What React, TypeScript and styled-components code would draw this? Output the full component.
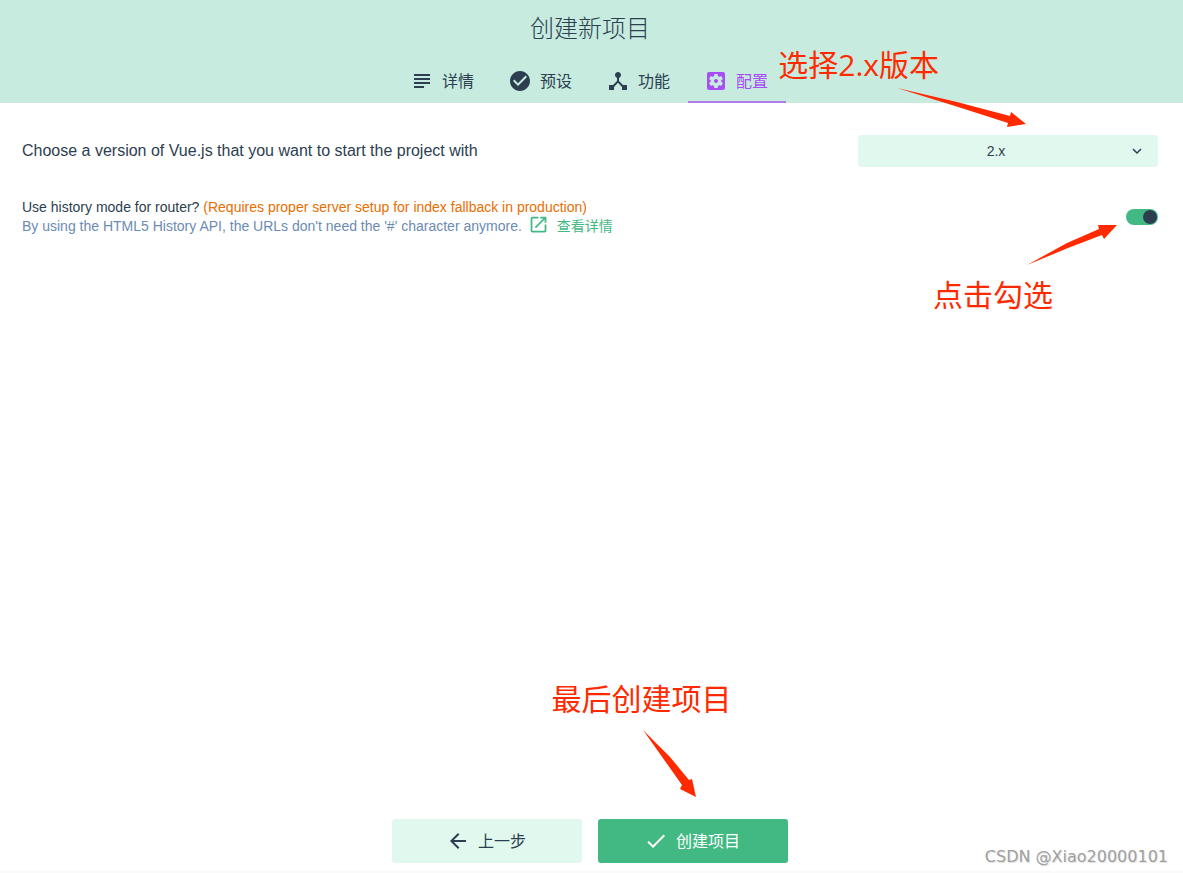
import React from 'react';
import styled, { createGlobalStyle } from 'styled-components';
import {
  MdArrowBack,
  MdCheckCircle,
  MdDeviceHub,
  MdDone,
  MdKeyboardArrowDown,
  MdOpenInNew,
  MdSettingsApplications,
  MdSubject,
} from 'react-icons/md';

const ink = '#2c3e50';
const green = '#42b983';
const mint = '#e0f8ed';
const purple = '#a84cf5';
const red = '#ff2a00';

const GlobalStyle = createGlobalStyle`
  * { box-sizing: border-box; }
  body {
    margin: 0;
    background: #fff;
    color: ${ink};
    font-family: "Liberation Sans", "Noto Sans CJK SC", sans-serif;
    font-size: 16px;
  }
  button, select { font: inherit; color: inherit; border: 0; }
`;

const Page = styled.div`
  position: relative;
  display: flex;
  flex-direction: column;
  min-height: 100vh;
`;

const Header = styled.header`
  display: flex;
  flex-direction: column;
  align-items: center;
  padding-right: 3px;
  background: #c7ebdf;
`;

const Title = styled.h1`
  margin: 0;
  padding-top: 13px;
  font-size: 24px;
  font-weight: 300;
  line-height: 32px;
`;

const Tabs = styled.nav`
  display: flex;
  padding-top: 14px;
`;

const Tab = styled.button<{ $active?: boolean }>`
  display: flex;
  align-items: center;
  gap: 8px;
  width: 98px;
  height: 44px;
  padding: 0 16px;
  background: none;
  box-shadow: ${(p) => (p.$active ? 'inset 0 -2px 0 #b07cec' : 'none')};
  color: ${(p) => (p.$active ? purple : ink)};
  white-space: nowrap;

  svg { flex: none; }
`;

const Label = styled.span`
  padding-bottom: 3px;
`;

const Main = styled.main`
  flex: 1;
  padding: 16px 25px 16px 22px;
`;

const Row = styled.div`
  position: relative;
  display: flex;
  align-items: center;
  justify-content: space-between;
  gap: 24px;
  min-height: 64px;
  margin-bottom: 2px;
`;

const Prompt = styled.label`
  line-height: 24px;
`;

const SelectBox = styled.div`
  position: relative;
  width: 300px;
  flex: none;

  svg {
    position: absolute;
    right: 12px;
    top: 7px;
    pointer-events: none;
  }
`;

const Select = styled.select`
  display: block;
  width: 100%;
  height: 32px;
  padding: 0 40px 0 16px;
  appearance: none;
  background: ${mint};
  border-radius: 3px;
  font-size: 14px;
  text-align: center;
  text-align-last: center;
`;

const Details = styled.div`
  font-size: 14px;
  line-height: 19px;
`;

const Question = styled.label`
  display: block;
`;

const Warning = styled.span`
  color: #ea6e00;
`;

const Hint = styled.div`
  display: flex;
  align-items: center;
  gap: 6px;
  height: 19px;
  color: #6b8bb3;
`;

const MoreLink = styled.a`
  display: flex;
  align-items: center;
  gap: 8px;
  color: ${green};
  text-decoration: none;

  svg { margin-bottom: 4px; }
`;

const Switch = styled.input`
  appearance: none;
  flex: none;
  width: 32px;
  height: 16px;
  margin: 0;
  border-radius: 8px;
  background: #cbd5d1;

  &::before {
    content: "";
    display: block;
    width: 14px;
    height: 14px;
    margin: 1px;
    border-radius: 50%;
    background: ${ink};
  }
  &:checked { background: ${green}; }
  &:checked::before { margin-left: 17px; }
`;

const Footer = styled.footer`
  position: relative;
  display: flex;
  justify-content: center;
  gap: 16px;
  padding: 8px 3px 8px 0;
  border-bottom: 2px solid #fafafa;
`;

const ActionButton = styled.button<{ $primary?: boolean }>`
  display: flex;
  align-items: center;
  justify-content: center;
  gap: 8px;
  width: 190px;
  height: 44px;
  padding: 0 8px 0 6px;
  border-radius: 3px;
  background: ${(p) => (p.$primary ? green : mint)};
  color: ${(p) => (p.$primary ? '#fff' : ink)};
`;

const Note = styled.span<{ $right?: number; $left?: string; $top: number }>`
  position: absolute;
  top: ${(p) => p.$top}px;
  ${(p) => (p.$left ? `left: ${p.$left};` : `right: ${p.$right}px;`)}
  color: ${red};
  font-family: "Open Sans", "Noto Sans CJK SC", sans-serif;
  font-size: 30px;
  line-height: 40px;
  white-space: nowrap;
  pointer-events: none;
`;

const Arrow = styled.svg<{ $right?: number; $left?: string; $top: number }>`
  position: absolute;
  top: ${(p) => p.$top}px;
  ${(p) => (p.$left ? `left: ${p.$left};` : `right: ${p.$right}px;`)}
  fill: ${red};
  pointer-events: none;
`;

const Watermark = styled.span`
  position: absolute;
  right: 15px;
  bottom: 2px;
  color: #a0a0a0;
  font-family: "DejaVu Sans", sans-serif;
  font-size: 16px;
  line-height: 24px;
  text-shadow: 1px 1px 0 #e4e4e4;
`;

const tabs = [
  { label: '详情', icon: MdSubject },
  { label: '预设', icon: MdCheckCircle },
  { label: '功能', icon: MdDeviceHub },
  { label: '配置', icon: MdSettingsApplications, active: true },
];

export default function App() {
  return (
    <Page>
      <GlobalStyle />
      <Header>
        <Title>创建新项目</Title>
        <Tabs>
          {tabs.map(({ label, icon: Icon, active }) => (
            <Tab key={label} type="button" $active={active}>
              <Icon size={24} />
              <Label>{label}</Label>
            </Tab>
          ))}
        </Tabs>
      </Header>

      <Main>
        <Row>
          <Prompt htmlFor="version">
            Choose a version of Vue.js that you want to start the project with
          </Prompt>
          <SelectBox>
            <Select id="version" defaultValue="2.x">
              <option>2.x</option>
              <option>3.x</option>
            </Select>
            <MdKeyboardArrowDown size={18} />
          </SelectBox>
          <Note $right={219} $top={-74}>选择2.x版本</Note>
          <Arrow $right={132} $top={-31} width="129" height="40" viewBox="0 0 129 40">
            <path d="M0 0 L60 14 L113 28 L114 24 L129 36 L110 39 L111 35 L58 18 Z" />
          </Arrow>
        </Row>

        <Row>
          <Details>
            <Question htmlFor="history">
              Use history mode for router?{' '}
              <Warning>(Requires proper server setup for index fallback in production)</Warning>
            </Question>
            <Hint>
              By using the HTML5 History API, the URLs don't need the '#' character anymore.
              <MoreLink href="#history">
                <MdOpenInNew size={21} />
                查看详情
              </MoreLink>
            </Hint>
          </Details>
          <Switch id="history" type="checkbox" defaultChecked />
          <Arrow $right={41} $top={39} width="90" height="42" viewBox="0 0 90 42">
            <path d="M0 41 L40 19 L72 5 L71 1 L90 1 L77 15 L75 11 L41 24 Z" />
          </Arrow>
          <Note $right={105} $top={90}>点击勾选</Note>
        </Row>
      </Main>

      <Footer>
        <ActionButton type="button">
          <MdArrowBack size={24} />
          <Label>上一步</Label>
        </ActionButton>
        <ActionButton type="button" $primary>
          <MdDone size={24} />
          <Label>创建项目</Label>
        </ActionButton>
        <Note $left="calc(50% - 40px)" $top={-132}>最后创建项目</Note>
        <Arrow $left="calc(50% + 51px)" $top={-81} width="54" height="68" viewBox="0 0 54 68">
          <path d="M0 0 L27 27 L46 50 L49 49 L53 67 L37 59 L39 55 L22 31 Z" />
        </Arrow>
        <Watermark>CSDN @Xiao20000101</Watermark>
      </Footer>
    </Page>
  );
}
